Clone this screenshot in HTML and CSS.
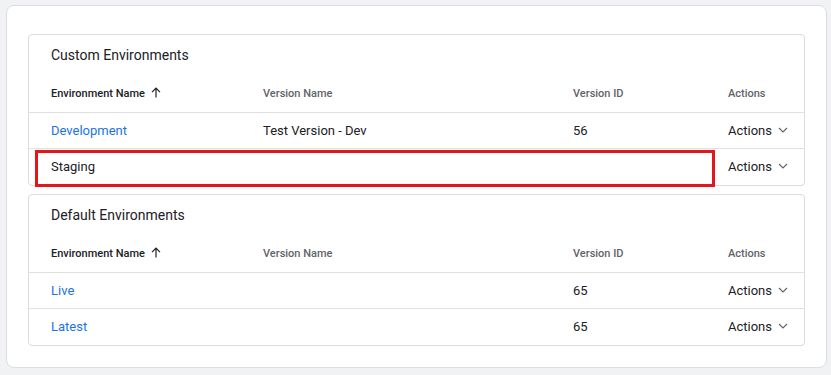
FILE: index.html
```html
<!DOCTYPE html>
<html lang="en">
<head>
  <meta charset="UTF-8" />
  <title>Environments</title>
  <link rel="stylesheet" href="styles.css">
</head>
<body>
  <div class="page">
    <div class="panel">

      <div class="env-card">
        <div class="env-title">Custom Environments</div>
        <div class="env-row env-head">
          <div class="cell first">Environment Name
            <svg class="sort" width="10" height="11" viewBox="0 0 10 11"><path d="M5 10.5V1.5M1 5.2L5 1.2L9 5.2" fill="none" stroke="#202124" stroke-width="1.2"/></svg>
          </div>
          <div class="cell">Version Name</div>
          <div class="cell">Version ID</div>
          <div class="cell">Actions</div>
        </div>
        <div class="env-row">
          <div class="cell first"><a href="#">Development</a></div>
          <div class="cell">Test Version - Dev</div>
          <div class="cell">56</div>
          <div class="cell"><span class="actions">Actions <svg width="10" height="6" viewBox="0 0 10 6"><path d="M1 1L5 5L9 1" fill="none" stroke="#5f6368" stroke-width="1.1"/></svg></span></div>
        </div>
        <div class="env-row">
          <div class="cell first">Staging</div>
          <div class="cell"></div>
          <div class="cell"></div>
          <div class="cell"><span class="actions">Actions <svg width="10" height="6" viewBox="0 0 10 6"><path d="M1 1L5 5L9 1" fill="none" stroke="#5f6368" stroke-width="1.1"/></svg></span></div>
        </div>
        <div class="highlight"></div>
      </div>

      <div class="env-card">
        <div class="env-title">Default Environments</div>
        <div class="env-row env-head">
          <div class="cell first">Environment Name
            <svg class="sort" width="10" height="11" viewBox="0 0 10 11"><path d="M5 10.5V1.5M1 5.2L5 1.2L9 5.2" fill="none" stroke="#202124" stroke-width="1.2"/></svg>
          </div>
          <div class="cell">Version Name</div>
          <div class="cell">Version ID</div>
          <div class="cell">Actions</div>
        </div>
        <div class="env-row">
          <div class="cell first"><a href="#">Live</a></div>
          <div class="cell"></div>
          <div class="cell">65</div>
          <div class="cell"><span class="actions">Actions <svg width="10" height="6" viewBox="0 0 10 6"><path d="M1 1L5 5L9 1" fill="none" stroke="#5f6368" stroke-width="1.1"/></svg></span></div>
        </div>
        <div class="env-row">
          <div class="cell first"><a href="#">Latest</a></div>
          <div class="cell"></div>
          <div class="cell">65</div>
          <div class="cell"><span class="actions">Actions <svg width="10" height="6" viewBox="0 0 10 6"><path d="M1 1L5 5L9 1" fill="none" stroke="#5f6368" stroke-width="1.1"/></svg></span></div>
        </div>
      </div>

    </div>
  </div>
</body>
</html>
```

FILE: styles.css
```css
body {
  margin: 0;
  background: #f1f2f4;
  font-family: Roboto, "Liberation Sans", sans-serif;
  color: #202124;
}
.page {
  padding: 5px 4px 7px 6px;
}
.panel {
  background: #fff;
  border: 1px solid #dcdde0;
  border-radius: 8px;
  padding: 28px 21px 21px 21px;
  display: flex;
  flex-direction: column;
  gap: 8px;
}
.env-card {
  position: relative;
  border: 1px solid #dadce0;
  border-radius: 4px;
  padding-bottom: 1px;
}
.env-title {
  height: 40px;
  line-height: 41px;
  padding-left: 22px;
  font-size: 14px;
}
.env-row {
  display: grid;
  grid-template-columns: 232px 310px 155px 1fr;
  height: 35px;
  align-items: center;
  font-size: 13px;
  border-top: 1px solid #e0e0e0;
}
.env-head {
  border-top: none;
  height: 37px;
  font-size: 11px;
  font-weight: 500;
  color: #5f6368;
}
.env-head .first {
  color: #202124;
}
.cell {
  padding-left: 2px;
  white-space: nowrap;
}
.cell.first {
  padding-left: 22px;
}
.sort {
  margin-left: 3px;
  vertical-align: -1px;
}
a {
  color: #1a73e8;
  text-decoration: none;
}
.actions svg {
  margin-left: 3px;
  vertical-align: 2px;
}
.highlight {
  position: absolute;
  left: 6px;
  top: 115px;
  width: 674px;
  height: 31px;
  border: 3px solid #e3161c;
}
```
